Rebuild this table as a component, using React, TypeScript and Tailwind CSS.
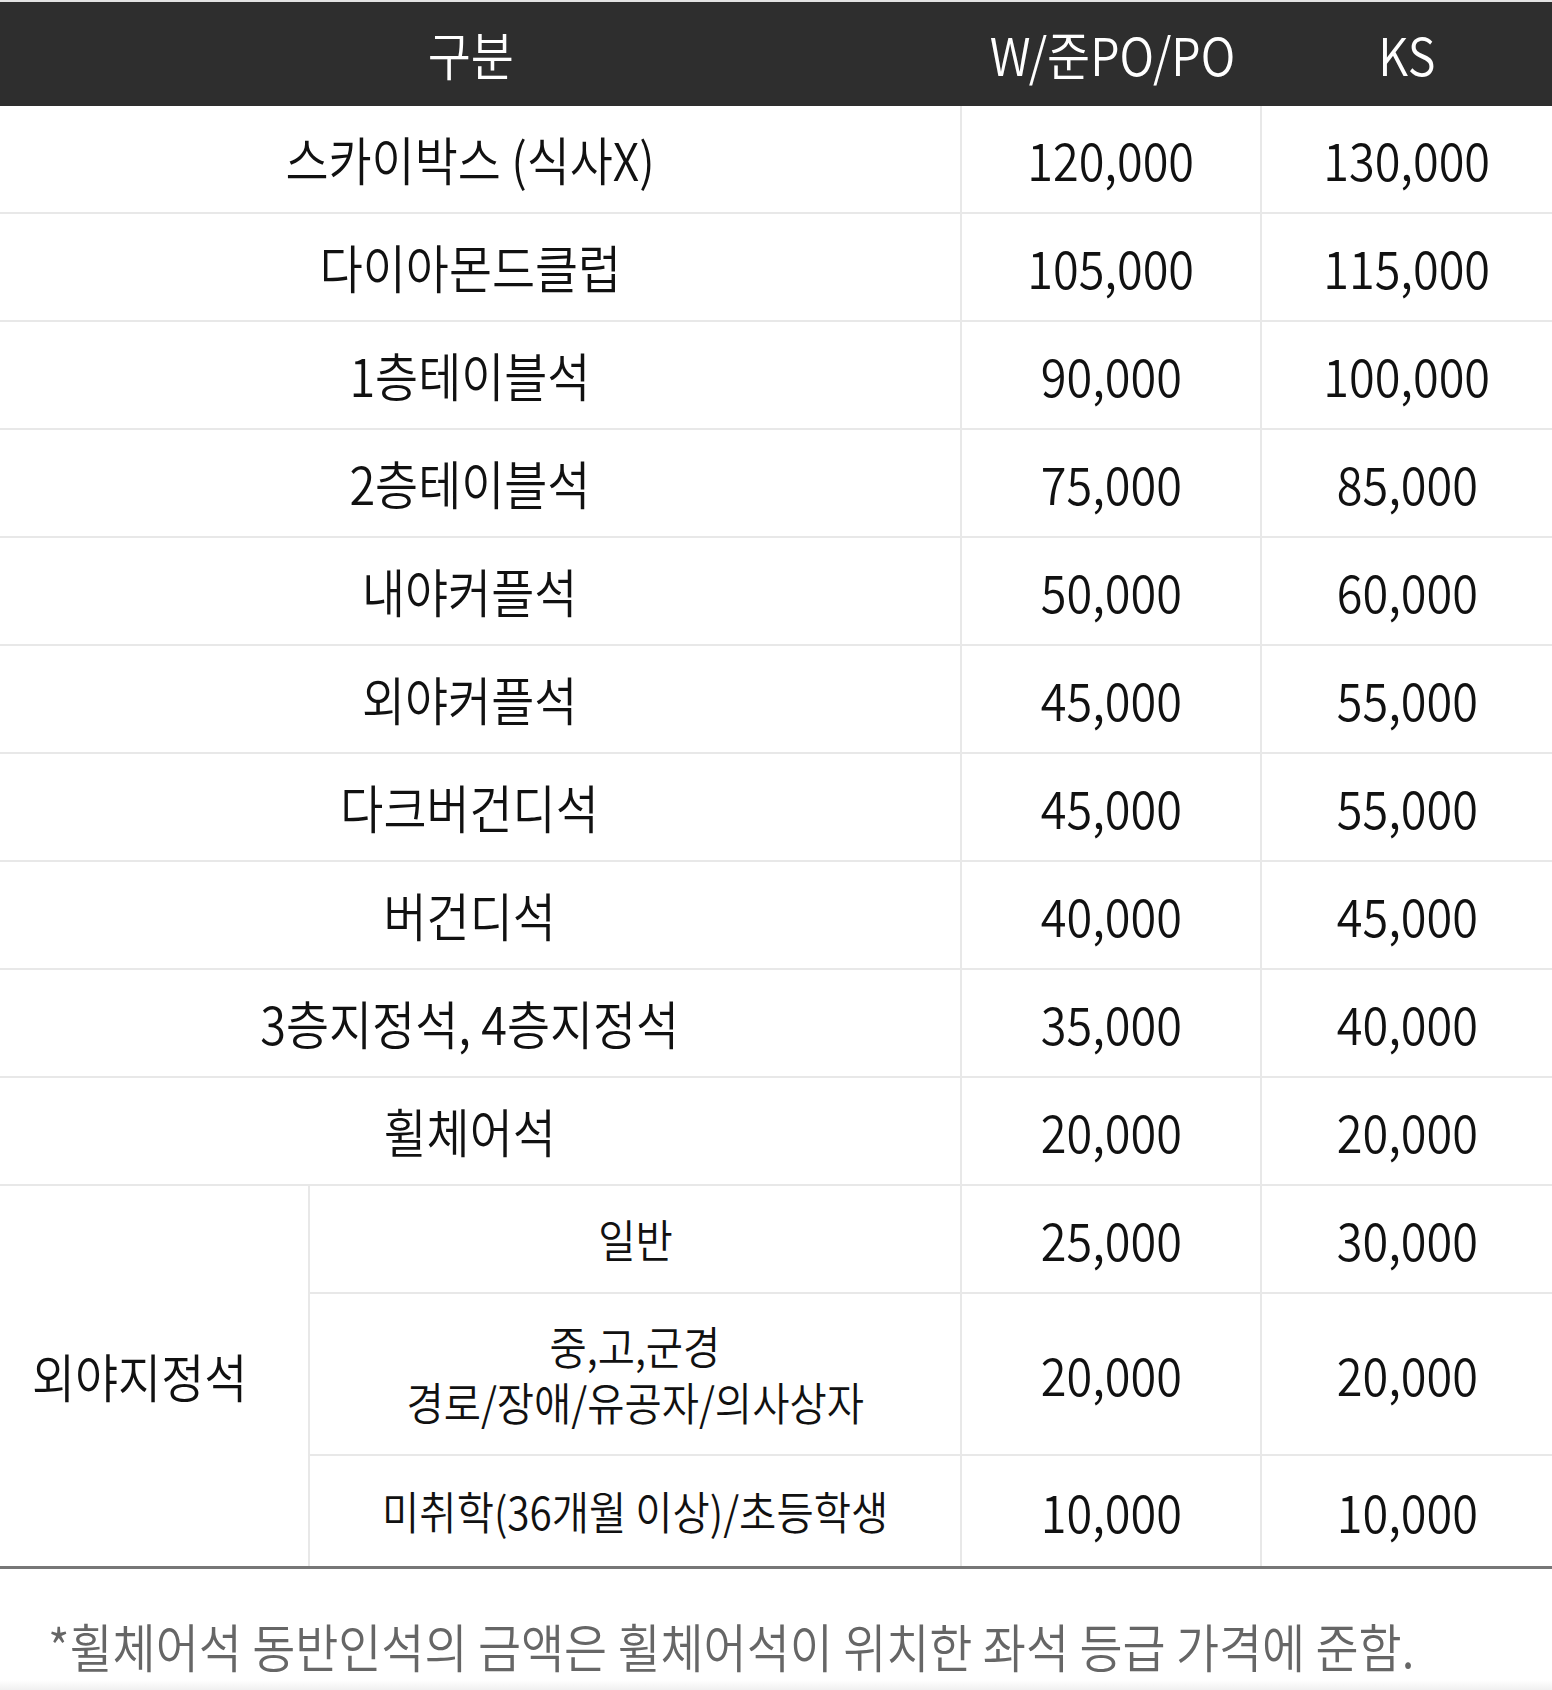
import React from "react";

const rows: [string, string, string][] = [
  ["스카이박스 (식사X)", "120,000", "130,000"],
  ["다이아몬드클럽", "105,000", "115,000"],
  ["1층테이블석", "90,000", "100,000"],
  ["2층테이블석", "75,000", "85,000"],
  ["내야커플석", "50,000", "60,000"],
  ["외야커플석", "45,000", "55,000"],
  ["다크버건디석", "45,000", "55,000"],
  ["버건디석", "40,000", "45,000"],
  ["3층지정석, 4층지정석", "35,000", "40,000"],
  ["휠체어석", "20,000", "20,000"],
];

function T({ children }: { children: React.ReactNode }) {
  return <span className="inline-block whitespace-nowrap text-center [transform:scaleX(0.9)]">{children}</span>;
}

export default function App() {
  return (
    <div
      className="w-[1552px] bg-white text-[#111111] text-[52px] font-[350] leading-[1.2]"
      style={{ fontFamily: '"Noto Sans CJK KR", "Noto Sans", sans-serif' }}
    >
      {/* header */}
      <div className="flex h-[106px] border-t-2 border-[#e3e3e3] bg-[#2e2e2e] text-white">
        <div className="flex w-[962px] items-center justify-center pr-[20px]">
          <T>구분</T>
        </div>
        <div className="flex w-[300px] items-center justify-center">
          <T>W/준PO/PO</T>
        </div>
        <div className="flex flex-1 items-center justify-center">
          <T>KS</T>
        </div>
      </div>

      {/* main rows */}
      {rows.map(([name, a, b]) => (
        <div key={name} className="flex h-[108px] border-b-2 border-[#e8e8e8]">
          <div className="flex w-[962px] items-center justify-center border-r-2 border-[#e8e8e8] pr-[20px]">
            <T>{name}</T>
          </div>
          <div className="flex w-[300px] items-center justify-center border-r-2 border-[#e8e8e8]">
            <T>{a}</T>
          </div>
          <div className="flex flex-1 items-center justify-center">
            <T>{b}</T>
          </div>
        </div>
      ))}

      {/* outfield reserved group */}
      <div className="flex border-b-[3px] border-[#777777]">
        <div className="flex w-[310px] items-center justify-center border-r-2 border-[#e8e8e8] pr-[28px]">
          <T>외야지정석</T>
        </div>
        <div className="flex flex-1 flex-col">
          <div className="flex h-[108px] border-b-2 border-[#e8e8e8]">
            <div className="flex w-[652px] items-center justify-center border-r-2 border-[#e8e8e8] text-[45px]">
              <T>일반</T>
            </div>
            <div className="flex w-[300px] items-center justify-center border-r-2 border-[#e8e8e8]">
              <T>25,000</T>
            </div>
            <div className="flex flex-1 items-center justify-center">
              <T>30,000</T>
            </div>
          </div>
          <div className="flex h-[162px] border-b-2 border-[#e8e8e8]">
            <div className="flex w-[652px] flex-col items-center justify-center border-r-2 border-[#e8e8e8] text-[45px] leading-[56px]">
              <T>중,고,군경</T>
              <T>경로/장애/유공자/의사상자</T>
            </div>
            <div className="flex w-[300px] items-center justify-center border-r-2 border-[#e8e8e8]">
              <T>20,000</T>
            </div>
            <div className="flex flex-1 items-center justify-center">
              <T>20,000</T>
            </div>
          </div>
          <div className="flex h-[110px]">
            <div className="flex w-[652px] items-center justify-center border-r-2 border-[#e8e8e8] text-[45px]">
              <T>미취학(36개월 이상)/초등학생</T>
            </div>
            <div className="flex w-[300px] items-center justify-center border-r-2 border-[#e8e8e8]">
              <T>10,000</T>
            </div>
            <div className="flex flex-1 items-center justify-center">
              <T>10,000</T>
            </div>
          </div>
        </div>
      </div>

      {/* footnote */}
      <div className="flex h-[111px] items-center pl-[48px] pt-[44px] text-[#666666]">
        <span className="inline-block origin-left whitespace-nowrap [transform:scaleX(0.9)]">
          *휠체어석 동반인석의 금액은 휠체어석이 위치한 좌석 등급 가격에 준함.
        </span>
      </div>
      <div className="h-[10px] bg-gradient-to-b from-white to-[#f0f0f0]" />
    </div>
  );
}
